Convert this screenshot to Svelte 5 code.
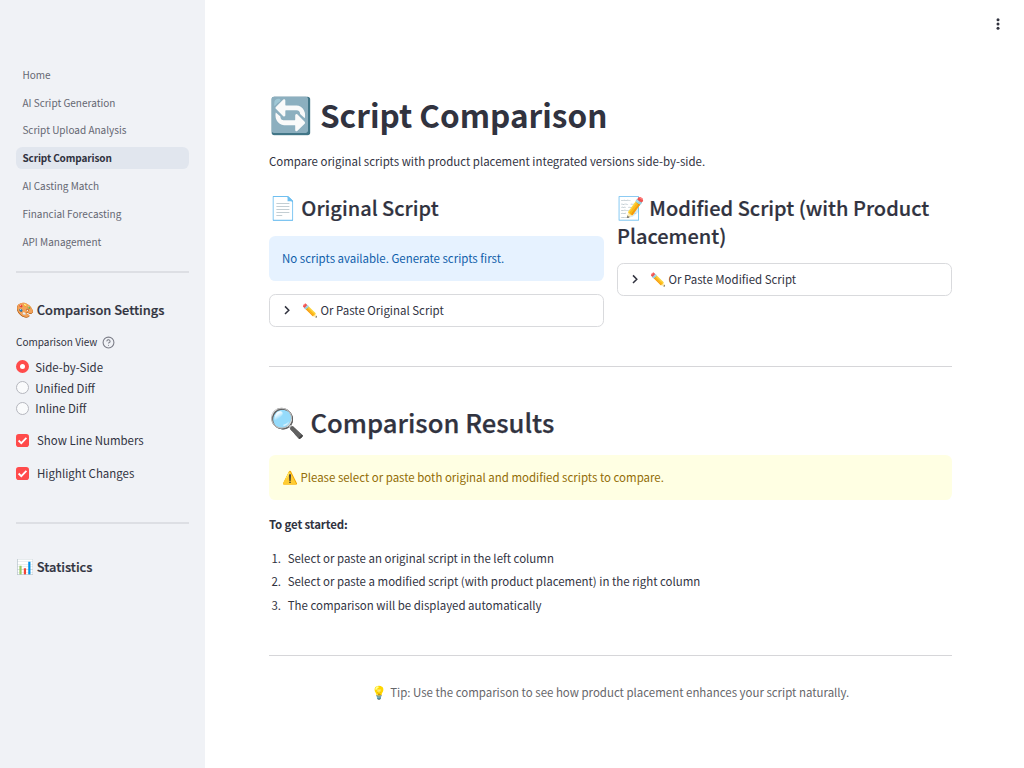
<script>
  const pages = ['Home', 'AI Script Generation', 'Script Upload Analysis', 'Script Comparison', 'AI Casting Match', 'Financial Forecasting', 'API Management'];
  const current = 'Script Comparison';
  const views = ['Side-by-Side', 'Unified Diff', 'Inline Diff'];
  const options = ['Show Line Numbers', 'Highlight Changes'];
  const steps = [
    'Select or paste an original script in the left column',
    'Select or paste a modified script (with product placement) in the right column',
    'The comparison will be displayed automatically'
  ];
</script>

{#snippet expander(label)}
  <div class="expander">
    <svg class="chevron" viewBox="0 0 16 16"><path d="M6 4.4l3.8 3.8L6 12" fill="none" stroke="#31333f" stroke-width="1.5" /></svg>
    <span><span class="emoji">✏️</span> {label}</span>
  </div>
{/snippet}

<div class="app">
  <aside>
    <nav>
      {#each pages as page}
        <a class:active={page === current} href="#top"><span>{page}</span></a>
      {/each}
    </nav>
    <div class="line nav-line"></div>
    <h4><span class="emoji">🎨</span> Comparison Settings</h4>
    <div class="label">
      <span>Comparison View</span>
      <svg viewBox="0 0 24 24" fill="none" stroke="#7c7e88" stroke-width="2" stroke-linecap="round" stroke-linejoin="round"><circle cx="12" cy="12" r="10" /><path d="M9.09 9a3 3 0 0 1 5.83 1c0 2-3 3-3 3" /><path d="M12 17h.01" /></svg>
    </div>
    <div class="radios">
      {#each views as view, i}
        <div class="choice"><i class="radio" class:on={i === 0}></i><span>{view}</span></div>
      {/each}
    </div>
    <div class="checks">
      {#each options as option}
        <div class="choice">
          <svg class="check" viewBox="0 0 13 13"><rect width="13" height="13" rx="2.8" fill="#ff4b4b" /><path d="M2.6 6.5L5.3 9.2L10.4 3.9" fill="none" stroke="#fff" stroke-width="1.8" /></svg>
          <span>{option}</span>
        </div>
      {/each}
    </div>
    <div class="line stats-line"></div>
    <h4><span class="emoji">📊</span> Statistics</h4>
  </aside>

  <main>
    <header>
      <svg viewBox="0 0 4 14" fill="#31333f"><circle cx="2" cy="2.8" r="1.5" /><circle cx="2" cy="7" r="1.5" /><circle cx="2" cy="11.2" r="1.5" /></svg>
    </header>
    <h1><span class="emoji">🔄</span> Script Comparison</h1>
    <p class="intro">Compare original scripts with product placement integrated versions side-by-side.</p>
    <div class="columns">
      <section>
        <h3><span class="emoji">📄</span> Original Script</h3>
        <div class="alert info"><span>No scripts available. Generate scripts first.</span></div>
        {@render expander('Or Paste Original Script')}
      </section>
      <section>
        <h3><span class="emoji">📝</span> Modified Script (with Product Placement)</h3>
        {@render expander('Or Paste Modified Script')}
      </section>
    </div>
    <div class="rule"></div>
    <h2><span class="emoji">🔍</span> Comparison Results</h2>
    <div class="alert warning"><span><span class="emoji">⚠️</span> Please select or paste both original and modified scripts to compare.</span></div>
    <p class="started">To get started:</p>
    <ol>
      {#each steps as step, i}
        <li><b>{i + 1}.</b><span>{step}</span></li>
      {/each}
    </ol>
    <div class="rule end"></div>
    <p class="tip"><span class="emoji">💡</span> Tip: Use the comparison to see how product placement enhances your script naturally.</p>
  </main>
</div>

<style>
  :global(body) { margin: 0; background: #fff; }
  .app {
    display: flex;
    width: 1024px;
    height: 768px;
    overflow: hidden;
    color: #31333f;
    font: 400 11.465px/20px "Noto Sans CJK SC", sans-serif;
  }
  * { box-sizing: border-box; }
  h1, h2, h3, h4, p, ol { margin: 0; padding: 0; }
  .emoji { font-family: "Noto Color Emoji", sans-serif; font-size: 1.117em; line-height: 0; font-weight: 400; }

  aside { width: 205px; flex: none; background: #f0f2f6; padding: 63.7px 16px 0; }
  nav { display: flex; flex-direction: column; gap: 5.4px; }
  nav a {
    display: flex;
    align-items: center;
    height: 22.4px;
    padding-left: 6.4px;
    border-radius: 6.4px;
    color: #656772;
    font-size: 10.03px;
    text-decoration: none;
  }
  nav a.active { background: #e1e6ee; color: #31333f; font-weight: 700; letter-spacing: -0.12px; }
  .line { height: 2px; background: #dddfe4; }
  .nav-line { margin-top: 18.1px; }
  h4 { font-weight: 500; -webkit-text-stroke: 0.2px; font-size: 12.85px; line-height: 20px; margin-top: 27.3px; white-space: nowrap; }
  .label { display: flex; align-items: center; gap: 5px; margin-top: 11.6px; height: 20px; font-size: 10.03px; }
  .label svg { width: 13px; height: 13px; margin-top: 1px; }
  .radios { margin-top: 4.6px; }
  .choice { display: flex; align-items: center; height: 20.8px; }
  .radio { width: 13px; height: 13px; border: 1px solid #b5b7be; border-radius: 50%; background: #fafbfc; margin-right: 6.3px; }
  .radio.on { border: 4px solid #ff4b4b; background: #fff; }
  .checks { display: flex; flex-direction: column; gap: 12px; margin-top: 11.2px; }
  .check { width: 13px; height: 13px; margin-right: 8px; }
  .stats-line { margin-top: 38.3px; }
  .stats-line + h4 { margin-top: 33.4px; }

  main { flex: 1; padding: 0 72px 0 64px; }
  header { height: 92px; display: flex; justify-content: flex-end; padding-top: 17px; margin-right: -48px; }
  header svg { width: 4px; height: 14px; }
  h1 { font-size: 31.5px; line-height: 44px; font-weight: 700; }
  .intro { margin-top: 15px; }
  .columns { display: grid; grid-template-columns: 1fr 1fr; gap: 13px; height: 172px; margin-top: 23px; }
  h3 { font-size: 20px; line-height: 28px; font-weight: 500; -webkit-text-stroke: 0.2px; margin-bottom: 13px; }
  .alert { height: 45px; border-radius: 6.4px; display: flex; align-items: center; padding: 0 13px 1px; }
  .info { background: #e6f2ff; color: #0f5eaa; margin: 14px 0 13px; }
  .warning { background: #ffffe3; color: #926c05; margin-top: 15px; }
  .expander { height: 33px; border: 1px solid #d9dadd; border-radius: 6.4px; display: flex; align-items: center; padding: 0 9px 1.5px; }
  .chevron { width: 16px; height: 16px; margin-right: 7px; }
  .rule { height: 1px; background: #d6d6d9; }
  h2 { font-size: 25.65px; line-height: 36px; font-weight: 500; -webkit-text-stroke: 0.25px; margin-top: 37px; }
  .started { font-weight: 700; letter-spacing: -0.14px; margin-top: 14px; }
  ol { list-style: none; margin-top: 14px; }
  li { display: flex; height: 23.4px; }
  li b { font-weight: 400; width: 12px; margin-right: 6.7px; text-align: right; }
  .end { margin-top: 36.8px; }
  .tip { text-align: center; color: #66666a; margin-top: 26px; }
</style>
